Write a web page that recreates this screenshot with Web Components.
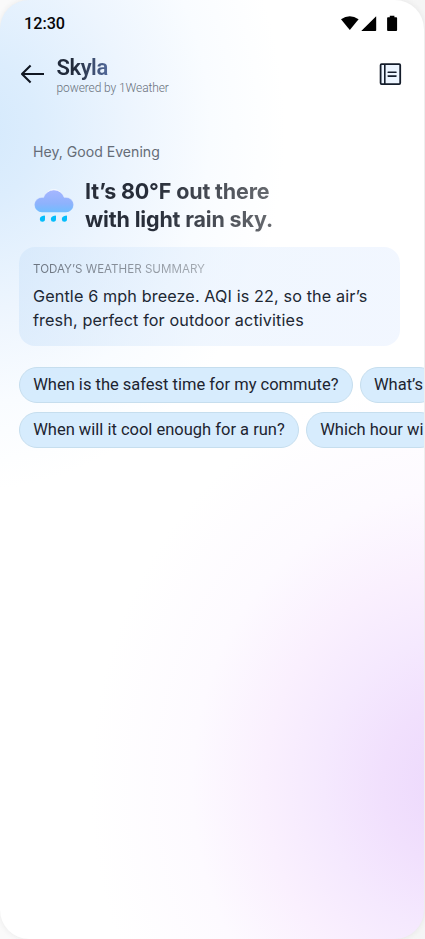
<!DOCTYPE html>
<html lang="en">
<head>
<meta charset="utf-8">
<title>Skyla</title>
<style>
html,body{margin:0;height:100%;overflow:hidden;background:#f3f3f3}
</style>
</head>
<body>
<skyla-screen></skyla-screen>
<script>
const define = (name, css, html) => customElements.define(name, class extends HTMLElement {
  constructor() {
    super();
    this.attachShadow({mode: 'open'}).innerHTML = `<style>*{box-sizing:border-box}${css}</style>${html}`;
  }
});

define('status-bar', `
  :host{display:flex;justify-content:space-between;align-items:flex-start;height:48px;padding:14px 26px 0 24px;
    font:500 16.2px/20px Roboto,sans-serif;color:#050608}
  svg{display:block;margin-top:1px}`, `
  <span class="time">12:30</span>
  <svg width="57" height="18" viewBox="0 0 57 18" fill="#000">
    <path d="M0 4.3Q8.8-1.6 17.6 4.3L8.8 15Z"/>
    <path d="M20.5 15.8L34.9 1.4Q35.2 1.2 35.2 1.8V15.2Q35.2 16 34.4 16H20.8Q20.3 16 20.5 15.8Z"/>
    <path d="M47 2.2h1.8V.7h4.6v1.5h1.8q.9 0 .9.9v12q0 1-.9 1H47q-.9 0-.9-1v-12q0-.9.9-.9Z"/>
  </svg>`);

define('app-header', `
  :host{display:flex;align-items:flex-start;height:58px;padding:6px 21px 0 20px}
  .back{margin-top:9px;flex:none}
  .names{flex:1;margin:1px 0 0 11.5px}
  .name{display:block;width:max-content;font:600 22px/26px Roboto,sans-serif;letter-spacing:-.45px;
    background:linear-gradient(90deg,#222b3b 35%,#52699a);background-clip:text;-webkit-background-clip:text;color:transparent}
  .by{display:block;font:300 12px/15px Roboto,sans-serif;letter-spacing:-.1px;color:#69717c}
  .notes{margin-top:9px}
  svg{display:block}`, `
  <svg class="back" width="25" height="22" viewBox="0 0 25 22" fill="none" stroke="#111722" stroke-width="2.1" stroke-linejoin="round"><path d="M24 11H2.4M10.6 2.6L2 11l8.6 8.4"/></svg>
  <div class="names"><span class="name"><slot></slot></span><span class="by"><slot name="by"></slot></span></div>
  <svg class="notes" width="24" height="24" viewBox="0 0 24 24" stroke="#141c2a" fill="none"><rect x="1.6" y="1.2" width="19.6" height="19.9" rx="1" fill="#edf5ff" stroke-width="1.8"/><path d="M5.8 1v20" stroke-width="1.6"/><path d="M9.2 9.3h7.8M9.2 13.1h7.8" stroke-width="1.6" stroke-linecap="round"/></svg>`);

define('rain-cloud', `
  :host{display:block;width:40px;height:38px} svg{display:block}`, `
  <svg width="40" height="38" viewBox="0 0 40 38">
    <defs><linearGradient id="c" x1="0" y1="0" x2="0" y2="1"><stop stop-color="#a6b6ff"/><stop offset=".62" stop-color="#8eb2fc"/><stop offset="1" stop-color="#6fbeff"/></linearGradient>
    <linearGradient id="s" x1="0" y1="0" x2="0" y2="1"><stop stop-color="#fff"/><stop offset=".35" stop-color="#d7e2ff" stop-opacity=".5"/><stop offset="1" stop-color="#8ebcff" stop-opacity="0"/></linearGradient></defs>
    <path d="M8 26.2A7.4 7.4 0 0 1 8 11.4q1 0 1.6.2A10.7 10.7 0 0 1 30.2 11.5q.8-.1 1.8-.1A7.4 7.4 0 0 1 32 26.2Z" fill="url(#c)" stroke="url(#s)" stroke-width="1"/>
    <g fill="#05bdfb"><path d="M10.4 29.6q.6 0 .6.6v2.8a2.6 2.6 0 0 1-5.2.2q0-2.8 4.6-3.6ZM21.4 29.6q.6 0 .6.6v2.8a2.6 2.6 0 0 1-5.2.2q0-2.8 4.6-3.6ZM32.4 29.6q.6 0 .6.6v2.8a2.6 2.6 0 0 1-5.2.2q0-2.8 4.6-3.6Z"/></g>
  </svg>`);

define('weather-greeting', `
  :host{display:block;padding:36px 33px 0;font-family:Inter,sans-serif}
  .hey{font-size:14.1px;line-height:20px;color:#656c77}
  .row{display:flex;gap:11px;margin-top:15px}
  rain-cloud{margin:9px 0 0 1px}
  .headline{font-weight:700;font-size:21.5px;line-height:28px;width:max-content;letter-spacing:-.17px;
    background:linear-gradient(90deg,#272d39 35%,#686b70);background-clip:text;-webkit-background-clip:text;color:transparent}`, `
  <div class="hey"><slot name="hey"></slot></div>
  <div class="row"><rain-cloud></rain-cloud><div class="headline"><slot></slot></div></div>`);

define('summary-card', `
  :host{display:block;width:381px;height:99px;margin:14px 0 0 19px;padding:13px 14px;border-radius:16px;
    background:linear-gradient(100deg,rgba(208,229,250,.6),rgba(232,242,254,.65) 50%,rgba(236,243,255,.7));font-family:Inter,sans-serif}
  .label{width:max-content;font-size:11.6px;font-weight:400;line-height:18px;
    background:linear-gradient(90deg,#6b7480,#a5abb3);background-clip:text;-webkit-background-clip:text;color:transparent}
  .text{margin-top:6px;font-size:16.2px;letter-spacing:.12px;line-height:24px;color:#202733;white-space:nowrap}`, `
  <div class="label"><slot name="label"></slot></div><div class="text"><slot></slot></div>`);

define('prompt-chip', `
  :host{display:flex;align-items:center;flex:none;height:36px;padding:0 13.2px;border:1px solid #c6deee;border-radius:18px;
    background:rgba(205,231,252,.8);font:400 16.5px/20px Roboto,sans-serif;color:#1d2430;white-space:nowrap;box-sizing:border-box}`, `<slot></slot>`);

define('prompt-row', `:host{display:flex;gap:7px;padding-left:19px;overflow:hidden}`, `<slot></slot>`);

define('skyla-screen', `
  :host{display:block;height:939px;width:425px;overflow:hidden;background:linear-gradient(90deg,#fafafa,#f5f5f5)}
  main{width:424px;height:939px;overflow:hidden;border-radius:29px;
    box-shadow:0 0 6px rgba(0,0,0,.07);
    background:
     radial-gradient(ellipse 310px 360px at -25px 130px,#d4e9fc 0%,#dcedfd 20%,#edf5fe 50%,#f9fcff 76%,rgba(255,255,255,0) 100%),
     radial-gradient(ellipse 365px 410px at 455px 785px,#ecd8fc 0%,#f1e0fd 20%,#f5e9fe 36%,#faf0fe 52%,#fdfaff 72%,rgba(255,255,255,0) 100%),
     #fff}
  .prompts{display:grid;gap:9px;margin-top:21px}`, `
  <main>
    <status-bar></status-bar>
    <app-header>Skyla<span slot="by">powered by 1Weather</span></app-header>
    <weather-greeting><span slot="hey">Hey, Good Evening</span>It’s 80°F out there<br>with light rain sky.</weather-greeting>
    <summary-card><span slot="label">TODAY’S WEATHER SUMMARY</span>Gentle 6 mph breeze. AQI is 22, so the air’s<br>fresh, perfect for outdoor activities</summary-card>
    <div class="prompts">
      <prompt-row><prompt-chip>When is the safest time for my commute?</prompt-chip><prompt-chip>What’s</prompt-chip></prompt-row>
      <prompt-row><prompt-chip>When will it cool enough for a run?</prompt-chip><prompt-chip>Which hour wi</prompt-chip></prompt-row>
    </div>
  </main>`);
</script>
</body>
</html>
